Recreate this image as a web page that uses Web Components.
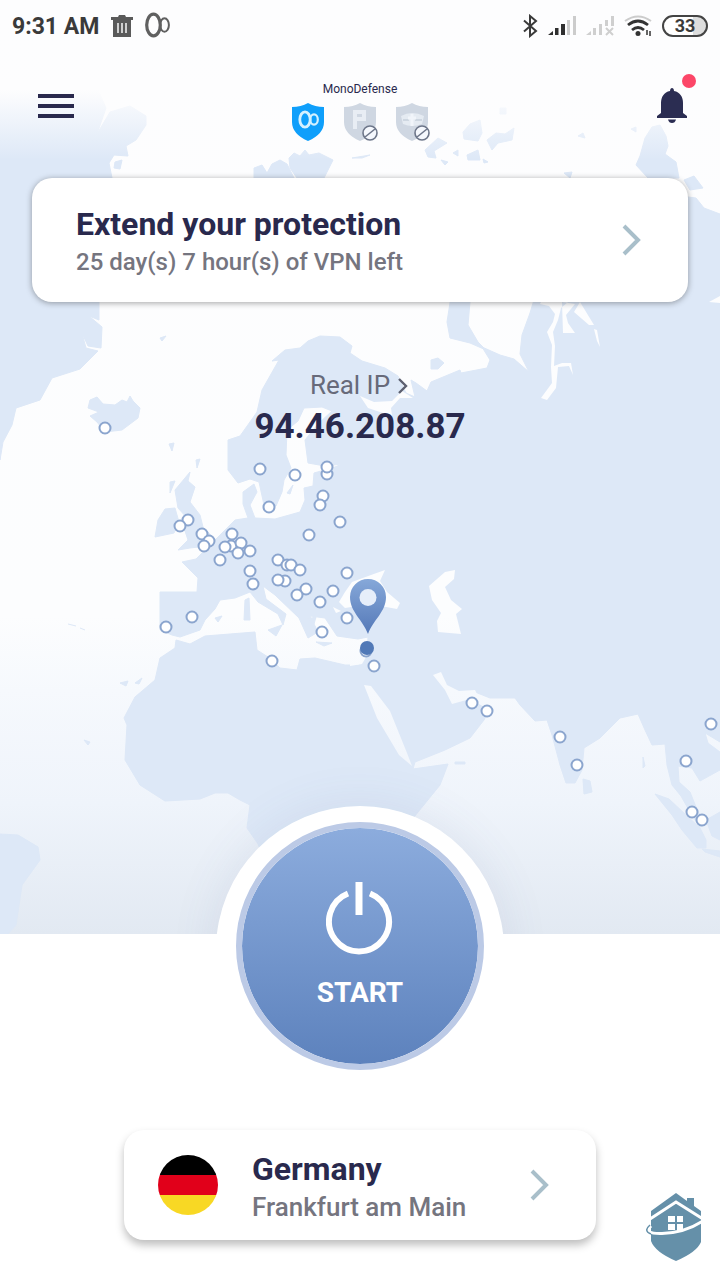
<!DOCTYPE html>
<html lang="en">
<head>
<meta charset="utf-8">
<meta name="viewport" content="width=device-width, initial-scale=1">
<title>MonoDefense VPN</title>
<style>
  body {
    margin: 0;
    font-family: Roboto, "Liberation Sans", sans-serif;
    color: #29294d;
    background: #ffffff;
  }
</style>
</head>
<body>
<vpn-screen>
  <world-map slot="map"></world-map>
  <status-bar slot="top" time="9:31 AM" battery="33"></status-bar>
  <top-bar slot="top">
    <span slot="title">MonoDefense</span>
    <shield-badge kind="vpn" label="VPN"></shield-badge>
    <shield-badge kind="password" label="Passwords" off></shield-badge>
    <shield-badge kind="private" label="Private browsing" off></shield-badge>
  </top-bar>
  <link-card slot="top" class="extend">
    <span slot="title">Extend your protection</span>
    <span slot="text">25 day(s) 7 hour(s) of VPN left</span>
  </link-card>
  <ip-readout slot="top" label="Real IP">94.46.208.87</ip-readout>
  <power-button slot="start">START</power-button>
  <link-card slot="location" class="location">
    <flag-icon slot="icon"></flag-icon>
    <span slot="title">Germany</span>
    <span slot="text">Frankfurt am Main</span>
  </link-card>
  <home-mark slot="mark"></home-mark>
</vpn-screen>

<script>
class VpnScreen extends HTMLElement {
  constructor() {
    super();
    this.attachShadow({ mode: 'open' });
    this.shadowRoot.innerHTML = `
    <style>
      :host {
        display: flex;
        flex-direction: column;
        min-height: 100vh;
      }
      .stage {
        flex: 1;
        display: grid;
        grid-template-columns: minmax(0, 1fr);
        overflow: hidden;
        background: #fdfdfe;
      }
      .stage > * {
        grid-area: 1 / 1;
      }
      .map {
        contain: size;
      }
      .content {
        display: flex;
        flex-direction: column;
        z-index: 1;
      }
      /* white hub that the start button sits in, cut off by the footer */
      .hub {
        width: 288px;
        height: 288px;
        margin: auto auto -160px;
        border-radius: 50%;
        background: #ffffff;
        box-shadow: 0 0 48px rgba(80,100,150,0.1);
      }
      .footer {
        position: relative;
        z-index: 2;
        display: flex;
        flex-direction: column;
        gap: 60px;
        padding-bottom: 40px;
        background: #ffffff;
      }
      .start {
        display: flex;
        justify-content: center;
        margin-top: -112px;
      }
      .location {
        padding: 0 124px;
      }
      .mark {
        position: absolute;
        right: 16px;
        bottom: 18px;
      }
      ::slotted(.extend) {
        margin: 32px 32px 0;
        --card-pad: 44px;
        --card-height: 124px;
        --card-text: 24px;
        --card-shadow: 0 1px 6px rgba(0,0,0,0.36);
      }
      ::slotted(.location) {
        --card-pad: 34px;
        --card-height: 110px;
        --card-text: 26px;
        --card-shadow: 0 5px 8px rgba(0,0,0,0.26);
      }
      ::slotted(ip-readout) {
        margin-top: 63px;
      }
    </style>
    <div class="stage">
      <div class="map"><slot name="map"></slot></div>
      <div class="content">
        <slot name="top"></slot>
        <div class="hub"></div>
      </div>
    </div>
    <div class="footer">
      <div class="start"><slot name="start"></slot></div>
      <div class="location"><slot name="location"></slot></div>
      <div class="mark"><slot name="mark"></slot></div>
    </div>
    `
  }
}

class StatusBar extends HTMLElement {
  constructor() {
    super();
    this.attachShadow({ mode: 'open' });
  }
  connectedCallback() {
    this.shadowRoot.innerHTML = `
    <style>
      :host {
        display: flex;
        align-items: center;
        justify-content: space-between;
        height: 52px;
        padding: 0 12px;
        color: #3a3a3a;
      }
      div {
        display: flex;
        align-items: center;
        gap: 12px;
      }
      .right {
        gap: 10px;
      }
      time {
        font-size: 23px;
        font-weight: 700;
      }
      .battery {
        box-sizing: border-box;
        width: 46px;
        height: 22px;
        border: 2px solid #444444;
        border-radius: 11px;
        background: linear-gradient(90deg, #ffffff 70%, #dddddd 70%);
        font-size: 18px;
        font-weight: 700;
        line-height: 18px;
        text-align: center;
      }
    </style>
    <div>
      <time>${this.getAttribute('time')}</time>
      <svg width="22" height="24" viewBox="0 0 22 24" aria-hidden="true">
        <path d="M0 3H7L8 1H14L15 3H22V6H0Z" fill="#5a5a5a"/>
        <path d="M2 6H20V23H2Z" fill="#5a5a5a"/>
        <path d="M7 9V19M11 9V19M15 9V19" stroke="#eeeeee" stroke-width="1.6"/>
      </svg>
      <svg width="26" height="28" viewBox="0 0 26 28" aria-hidden="true" fill="none" stroke="#606060">
        <ellipse cx="8.500" cy="13" rx="6.800" ry="10.800" stroke-width="3.200"/>
        <ellipse cx="19.500" cy="13" rx="4.400" ry="6.800" stroke-width="2"/>
      </svg>
    </div>
    <div class="right">
      <svg width="16" height="24" viewBox="0 0 16 24" aria-hidden="true" fill="none" stroke="#3a3a3a" stroke-width="2">
        <path d="M2 6.500L14 17L8 22V2L14 7L2 17.500"/>
      </svg>
      <svg width="28" height="20" viewBox="0 0 28 20" aria-hidden="true">
        <path d="M0 19L5 15V19ZM7 12H10.500V19H7ZM13 8H17V19H13Z" fill="#2f2f2f"/>
        <path d="M19 4H22V19H19ZM25 0H28V19H25Z" fill="#cccccc"/>
      </svg>
      <svg width="28" height="20" viewBox="0 0 28 20" aria-hidden="true">
        <path d="M0 19L5 15V19ZM7 12H10V19H7ZM13 8H16V19H13ZM19 4H22V10H19ZM25 0H28V10H25Z" fill="#cfcfcf"/>
        <path d="M20 12L27 19M27 12L20 19" stroke="#cfcfcf" stroke-width="2"/>
      </svg>
      <svg width="28" height="22" viewBox="0 0 28 22" aria-hidden="true" fill="none" stroke-width="2.800">
        <path d="M1 6Q14 -3 27 6" stroke="#cccccc" stroke-width="2"/>
        <path d="M4 10Q14 2 24 10M8 15Q14 10 20 15" stroke="#333333"/>
        <circle cx="14" cy="18.500" r="2.500" fill="#333333"/>
        <path d="M23 15V20M26 16V21" stroke="#555555" stroke-width="1.800"/>
      </svg>
      <span class="battery">${this.getAttribute('battery')}</span>
    </div>
    `
  }
}

class TopBar extends HTMLElement {
  constructor() {
    super();
    this.attachShadow({ mode: 'open' });
    this.shadowRoot.innerHTML = `
    <style>
      :host {
        display: grid;
        grid-template-columns: 1fr auto 1fr;
        align-items: start;
        height: 70px;
        margin-top: 24px;
        padding: 0 32px;
      }
      button {
        position: relative;
        display: block;
        padding: 0;
        border: none;
        background: none;
        cursor: pointer;
      }
      .menu {
        margin: 17px 6px;
      }
      .bell {
        justify-self: end;
        margin-top: 11px;
      }
      .dot {
        position: absolute;
        top: -13px;
        right: -8px;
        width: 14px;
        height: 14px;
        border-radius: 50%;
        background: #fc4668;
      }
      .middle {
        padding-top: 6px;
        font-size: 12px;
        line-height: 14px;
        text-align: center;
      }
      .shields {
        display: flex;
        gap: 20px;
        margin-top: 6px;
      }
      svg {
        display: block;
      }
    </style>
    <button class="menu" aria-label="Menu">
      <svg width="36" height="26" viewBox="0 0 36 26" stroke="#29294d" stroke-width="4">
        <path d="M0 3H36M0 13H36M0 23H36"/>
      </svg>
    </button>
    <div class="middle">
      <slot name="title"></slot>
      <div class="shields"><slot></slot></div>
    </div>
    <button class="bell" aria-label="Notifications">
      <svg width="32" height="36" viewBox="0 0 32 36" fill="#2b2d52">
        <path d="M14 4C14 0 18 0 18 4C24 5 27 10 27 16V26L31 29V31H1V29L5 26V16C5 10 8 5 14 4Z"/>
        <path d="M12 32.500H20Q19 36 16 36Q13 36 12 32.500Z"/>
      </svg>
      <span class="dot"></span>
    </button>
    `
  }
}

class ShieldBadge extends HTMLElement {
  constructor() {
    super();
    this.attachShadow({ mode: 'open' });
  }
  connectedCallback() {
    const off = this.hasAttribute('off')
    const glyphs = {
      vpn: `
        <ellipse cx="13" cy="17.500" rx="5.200" ry="7.600" fill="none" stroke="#d5f1ff" stroke-width="2.800"/>
        <ellipse cx="22" cy="17.500" rx="3.800" ry="5.200" fill="none" stroke="#d5f1ff" stroke-width="2.200"/>`,
      password: `
        <path d="M11 27V10H20V17H11" fill="none" stroke="#e8edf4" stroke-width="4"/>`,
      private: `
        <path d="M5 14Q16 8 28 14L26 22Q16 26 7 22Z" fill="#e5ebf2"/>
        <path d="M7 18H13M19 18H26" stroke="#ced7e1" stroke-width="2"/>
        <path d="M16 12V24M12 16H20" stroke="#f1f5fa" stroke-width="3"/>`
    }
    this.shadowRoot.innerHTML = `
    <style>
      :host {
        display: block;
      }
      svg {
        display: block;
        overflow: visible;
      }
    </style>
    <svg width="32" height="40" viewBox="0 0 32 40" role="img" aria-label="${this.getAttribute('label')}">
      <path d="M16 1Q23 5 32 5V20Q32 32 16 39Q0 32 0 20V5Q9 5 16 1Z" fill="${off ? '#cfd7e2' : '#0f9ffb'}"/>
      ${glyphs[this.getAttribute('kind')]}
      ${off ? `<circle cx="26" cy="31" r="7" fill="#f5f8fd" stroke="#6d7689" stroke-width="1.600"/>
      <path d="M21 35L31 27" stroke="#6d7689" stroke-width="1.600"/>` : ''}
    </svg>
    `
  }
}

class LinkCard extends HTMLElement {
  constructor() {
    super();
    this.attachShadow({ mode: 'open' });
    this.shadowRoot.innerHTML = `
    <style>
      :host {
        display: block;
      }
      button {
        box-sizing: border-box;
        display: flex;
        align-items: center;
        gap: 34px;
        width: 100%;
        min-height: var(--card-height);
        padding: 0 46px 0 var(--card-pad);
        border: none;
        border-radius: 20px;
        background: #ffffff;
        box-shadow: var(--card-shadow);
        color: inherit;
        font: inherit;
        text-align: left;
        cursor: pointer;
      }
      .text {
        flex: 1;
        padding-top: 6px;
        font-size: var(--card-text);
        font-weight: 500;
        line-height: 38px;
        color: #75757f;
      }
      .title {
        display: block;
        font-size: 32px;
        font-weight: 700;
        color: #29294d;
      }
    </style>
    <button>
      <slot name="icon"></slot>
      <span class="text">
        <slot class="title" name="title"></slot>
        <slot name="text"></slot>
      </span>
      <svg width="20" height="32" viewBox="0 0 20 32" aria-hidden="true">
        <path d="M2 2L16 16L2 30" fill="none" stroke="#a9bfca" stroke-width="4"/>
      </svg>
    </button>
    `
  }
}

class FlagIcon extends HTMLElement {
  constructor() {
    super();
    this.attachShadow({ mode: 'open' });
    this.shadowRoot.innerHTML = `
    <style>
      :host {
        display: block;
        width: 60px;
        height: 60px;
        border-radius: 50%;
        background: linear-gradient(#000000 0 20px, #e1001a 20px 40px, #f8d824 40px);
      }
    </style>
    `
  }
}

class IpReadout extends HTMLElement {
  constructor() {
    super();
    this.attachShadow({ mode: 'open' });
  }
  connectedCallback() {
    this.shadowRoot.innerHTML = `
    <style>
      :host {
        display: flex;
        flex-direction: column;
        align-items: center;
        line-height: 41px;
        font-size: 35px;
        font-weight: 700;
      }
      button {
        display: flex;
        align-items: center;
        gap: 8px;
        padding: 0;
        border: none;
        background: none;
        color: #676a7a;
        font: inherit;
        font-size: 26px;
        font-weight: 400;
        cursor: pointer;
      }
    </style>
    <button>
      ${this.getAttribute('label')}
      <svg width="12" height="16" viewBox="0 0 12 16" aria-hidden="true">
        <path d="M1 1L8 8L1 15" fill="none" stroke="#5d6070" stroke-width="2.400"/>
      </svg>
    </button>
    <slot></slot>
    `
  }
}

class PowerButton extends HTMLElement {
  constructor() {
    super();
    this.attachShadow({ mode: 'open' });
    this.shadowRoot.innerHTML = `
    <style>
      :host {
        display: block;
      }
      button {
        box-sizing: border-box;
        display: flex;
        flex-direction: column;
        align-items: center;
        justify-content: center;
        gap: 20px;
        width: 248px;
        height: 248px;
        padding: 0;
        border: 6px solid #bccae6;
        border-radius: 50%;
        background: linear-gradient(#8cacdd, #5d82bd) padding-box;
        color: #ffffff;
        font: inherit;
        font-size: 28px;
        font-weight: 700;
        line-height: 36px;
        cursor: pointer;
      }
    </style>
    <button>
      <svg width="68" height="74" viewBox="0 0 68 74" aria-hidden="true" fill="none" stroke="#ffffff" stroke-width="6">
        <path d="M22 12.500A30 30 0 1 0 44 12.500"/>
        <path d="M33 1V34" stroke-width="7"/>
      </svg>
      <slot></slot>
    </button>
    `
  }
}

class HomeMark extends HTMLElement {
  constructor() {
    super();
    this.attachShadow({ mode: 'open' });
    this.shadowRoot.innerHTML = `
    <style>
      :host, svg {
        display: block;
      }
    </style>
    <svg width="58" height="70" viewBox="0 0 58 70" aria-hidden="true">
      <path d="M30 1L41 9V6H48V14L55 19V50Q51 60 30 69Q9 60 5 49V19Z" fill="#6590a9"/>
      <path d="M4 27L30 10L57 27" fill="none" stroke="#ffffff" stroke-width="3"/>
      <path d="M22 24H29V30H22ZM31 24H37V30H31ZM22 32H29V38H22ZM31 32H37V38H31Z" fill="#ffffff"/>
      <path d="M5 34Q-3 42 16 41.500Q38 41 57 29" fill="none" stroke="#ffffff" stroke-width="3"/>
      <path d="M4 33Q-3 39 5 42" fill="none" stroke="#6590a9" stroke-width="1.500"/>
    </svg>
    `
  }
}

class WorldMap extends HTMLElement {
  constructor() {
    super();
    this.attachShadow({ mode: 'open' });
    const servers = [
      [105, 428], [260, 469], [295, 475], [327, 474], [327, 467], [269, 507], [323, 496], [320, 505],
      [340, 522], [309, 535], [188, 520], [180, 526], [202, 534], [209, 541], [204, 546], [232, 534],
      [231, 546], [241, 543], [225, 547], [238, 553], [250, 551], [220, 560], [250, 571], [253, 584],
      [278, 560], [287, 565], [291, 565], [300, 570], [285, 581], [278, 580], [306, 589], [297, 595],
      [320, 602], [333, 591], [347, 573], [347, 618], [322, 632], [192, 617], [166, 627], [272, 661],
      [366, 651], [374, 666], [472, 703], [487, 711], [560, 737], [577, 765], [711, 724], [686, 761],
      [692, 812], [702, 820]
    ]
    this.shadowRoot.innerHTML = `
    <style>
      :host, svg {
        display: block;
        width: 100%;
        height: 100%;
      }
      .land {
        fill: #dde8f7;
        stroke: #dde8f7;
        stroke-linejoin: round;
      }
      .sea {
        fill: url(#sea);
      }
      .servers {
        fill: #ffffff;
        stroke: #8ba5ce;
        stroke-width: 2;
      }
    </style>
    <svg viewBox="0 0 720 934" preserveAspectRatio="xMidYMin slice" role="img" aria-label="Server map">
      <defs>
        <linearGradient id="sea" gradientUnits="userSpaceOnUse" x1="0" y1="0" x2="0" y2="934">
          <stop offset="0" stop-color="#fdfdfe"/>
          <stop offset="0.66" stop-color="#fcfdfe"/>
          <stop offset="0.74" stop-color="#f6f9fd"/>
          <stop offset="0.86" stop-color="#eff4fb"/>
          <stop offset="1" stop-color="#e2e9f2"/>
        </linearGradient>
        <linearGradient id="haze" gradientUnits="userSpaceOnUse" x1="0" y1="90" x2="0" y2="160">
          <stop offset="0" stop-color="#fdfdfe"/>
          <stop offset="1" stop-color="#fdfdfe" stop-opacity="0"/>
        </linearGradient>
        <linearGradient id="pin" x1="0" y1="0" x2="0" y2="1">
          <stop offset="0" stop-color="#86a8d9"/>
          <stop offset="1" stop-color="#5579b8"/>
        </linearGradient>
      </defs>
      <rect class="sea" width="720" height="934"/>
      <g class="land">
        <!-- Greenland -->
        <path d="M0 90H98L106 108L97 134L110 112L130 106L146 116V125L136 140L126 146L128 156L114 155L109 163L112 178L104 230L99 302V320L89 316L102 327L101 348L88 346L82 333L86 348L98 351L80 369L52 378L40 400L16 408L12 425L3 442L0 460Z"/>
        <path d="M115 162L122 160L120 169L114 168Z"/>
        <!-- Iceland -->
        <path d="M90 400L97 397L103 404L115 405L122 400L127 402L130 396L133 401L140 408L138 418L122 430L105 432L97 422L90 416L99 412L88 408Z"/>
        <!-- Svalbard, Franz Josef Land -->
        <path d="M254 178V168L262 165L267 173L272 164L280 160L287 164L294 178ZM289 158L294 153L300 156L305 150L309 155L319 153L333 160L328 170L324 178H297L290 168ZM352 158L370 155L362 158Z"/>
        <path d="M425 150L438 138L447 143L434 151L436 158L428 157ZM463 132L470 124L480 120L482 133L478 141L464 139ZM487 140L496 133L505 134L514 128L512 140L498 143L492 150ZM467 155L478 150L480 160L468 160ZM500 108H506V114H500ZM453 153L458 150V156ZM441 160L448 162L445 165ZM483 159L488 162L484 163ZM578 136L583 133L585 138ZM564 173L572 172L570 178Z"/>
        <!-- Severnaya Zemlya and Taimyr -->
        <path d="M645 138L652 127L660 125L666 136L668 146L665 154L676 162L679 178H648L636 165L640 156ZM684 180L694 176L703 188L690 190ZM631 129L636 127V132Z"/>
        <!-- Britain and Ireland -->
        <path d="M180 484L190 472L188 481L195 487L190 502L200 515L203 527L211 535L207 546L190 548L178 550L188 540L184 528L187 518L178 508L175 490ZM165 509L175 508L179 522L174 533L155 537L158 520ZM170 482L175 481L170 493ZM169 444L174 443L172 451ZM196 460L200 459L197 468Z"/>
        <!-- Novaya Zemlya -->
        <path d="M452 290H471L468 325L478 342L486 350L470 343L450 338L447 322ZM431 360L438 358L444 363L438 369H431Z"/>
        <!-- Europe, Asia and Africa -->
        <path d="M228 440L240 436L257 412L262 390L279 360L272 361L285 350L300 348L308 341L320 336L340 337L352 346L350 353L362 361L385 368L398 376L406 393L415 397L411 380L416 383L427 391L431 382L460 370L461 373L487 368L490 360L482 347L500 355L514 359L529 372L520 354L522 335L530 313L537 290L580 255L650 240L680 196L696 198L704 208L720 214V700L720 742L705 733L708 743L720 752V770L700 781L692 768L678 766L679 782L690 792L698 812L707 823L700 827L690 812L681 796L672 785L667 765L665 744L652 745L645 730L638 714L620 718L600 738L584 748L582 770L575 783L566 783L560 765L552 735L547 720L535 721L520 705L515 698H490L475 692L480 704L488 712L484 720L470 738L445 750L415 762L413 769L448 764L440 785L410 822L380 860H265L258 844L247 828L250 805L240 800L228 793L215 793L200 799L165 801L140 785L125 760L127 725L124 718L135 697L155 680L160 658L175 648L176 640L190 644L205 636L255 632L257 650L268 657L280 668L297 670L300 659L315 658L345 665H359L367 655L368 637L358 639L337 636L325 618L310 616L318 632L308 638L299 618L275 595L263 586L266 599L286 614L283 625L278 614L258 602L250 592L235 598L220 600L215 609L205 620L200 630L180 637L172 635L160 630V592H197L198 578L182 562L196 559L215 540L235 520L248 518L243 504L243 492L254 484L257 492L250 505L255 518L275 519L300 512L305 500L304 488L313 486L314 473L335 467L342 464L325 466L308 463L305 440L318 424L332 411L322 407L304 408L298 421L287 430L286 455L291 468L284 480L282 492L276 506L264 505L259 482L250 479L238 483L228 470Z"/>
        <!-- Mediterranean and Atlantic islands -->
        <path d="M245 600L249 598L250 620L244 620ZM268 630L282 625L276 636ZM316 642L332 643L324 646ZM215 618L222 616L218 622ZM307 619L316 617L314 624ZM287 493L293 485L290 494ZM68 624L76 626M80 628L85 630M120 683L128 681L126 686ZM135 683L142 678L139 684ZM84 740L90 742L88 745ZM160 338L166 336L162 341Z"/>
        <!-- Sri Lanka, Andamans, Sumatra -->
        <path d="M583 779L590 781L592 792L584 794ZM643 757L645 766L643 768ZM655 794L669 799L686 815L700 828L706 840V848H697L682 830L672 815ZM702 849L720 851V857L705 852ZM706 820L720 812V840L712 836ZM455 762H465V764H455Z"/>
        <!-- South America -->
        <path d="M0 834L18 835L38 847L40 860L22 885L16 925L8 934H0Z"/>
      </g>
      <g class="sea">
        <!-- White Sea, Gulf of Ob, Yenisei -->
        <path d="M360 396L374 402L392 401L402 391L413 398L400 398L391 408L392 416L368 408Z"/>
        <path d="M540 304L549 306L555 314L553 322L547 332L552 345L551 367L552 383L541 398L547 400L556 388L558 367L569 366L573 375L571 363L562 363L554 366L555 346L553 332L558 320L561 308L568 302H541ZM562 302L575 304L566 315L568 323L575 333H563ZM580 302L594 325L589 325L574 312ZM594 329L597 330L600 347L597 341ZM709 302L720 296V303Z"/>
        <!-- Black Sea and Caspian -->
        <path d="M345 608L339 602L345 592L352 582L371 575L385 570L380 581L387 592L400 603L397 609L370 604ZM429 586L445 572L455 570L454 579L445 587L451 600L462 609L456 614L461 634L438 632L437 621L441 613L432 600ZM333 607L341 611L336 613Z"/>
        <!-- Red Sea, Persian Gulf -->
        <path d="M364 685L371 686L390 711L407 753L412 766L399 755L377 718ZM433 675L441 672L447 685L459 691L475 690L480 700L486 708L470 699L452 704L445 690Z"/>
        <path d="M354 640L366 642L369 652L362 664L350 666L350 650Z"/>
      </g>
      <rect y="80" width="720" height="80" fill="url(#haze)"/>
      <g class="servers">${servers.map(([x, y]) => `<circle cx="${x}" cy="${y}" r="5.5"/>`).join('')}</g>
      <circle cx="367" cy="648" r="7" fill="#5179b7"/>
      <path fill="url(#pin)" d="M368 634C363 620 350 612 350 597A18 18 0 0 1 386 597C386 612 373 620 368 634Z"/>
      <circle cx="368" cy="597.500" r="8.500" fill="#e6eefa"/>
    </svg>
    `
  }
}

window.customElements.define('vpn-screen', VpnScreen)
window.customElements.define('status-bar', StatusBar)
window.customElements.define('top-bar', TopBar)
window.customElements.define('shield-badge', ShieldBadge)
window.customElements.define('link-card', LinkCard)
window.customElements.define('flag-icon', FlagIcon)
window.customElements.define('ip-readout', IpReadout)
window.customElements.define('power-button', PowerButton)
window.customElements.define('home-mark', HomeMark)
window.customElements.define('world-map', WorldMap)
</script>
</body>
</html>
